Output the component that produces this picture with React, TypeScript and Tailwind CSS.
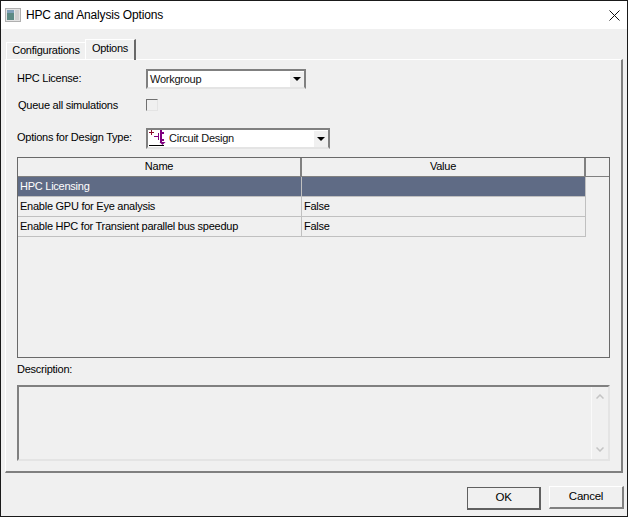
function ComboArrow() {
  return (
    <div className="flex h-full w-[15px] shrink-0 items-center justify-center border-l border-t border-white bg-[#f0f0f0]">
      <svg width="8" height="4" viewBox="0 0 8 4"><path d="M0 0h8L4 4z" fill="#000" /></svg>
    </div>
  );
}

function CircuitIcon() {
  return (
    <svg width="18" height="18" viewBox="0 0 18 18" className="shrink-0" fill="none">
      <path d="M1 3.500h5M3.500 1v5" stroke="#8b0a2a" />
      <path d="M6 7.500h5M10.500 4v7" stroke="#800080" />
      <path d="M13 1v13M13 4h3M13 11h3" stroke="#800080" strokeWidth="2" />
      <path d="M11.500 13h6l-3 3z" fill="#800080" />
      <path d="M1 16.500h15" stroke="#000" />
    </svg>
  );
}

function Row({ name, value, selected }: { name: string; value: string; selected?: boolean }) {
  return (
    <div className={`flex h-5 w-[568px] border-b border-[#c0c0c0] leading-[19px] ${selected ? 'bg-[#5f6b85] text-white' : ''}`}>
      <div className="w-[284px] truncate border-r border-[#c0c0c0] pl-[2px]">{name}</div>
      <div className="flex-1 border-r border-[#c0c0c0] pl-[2px]">{value}</div>
    </div>
  );
}

export default function App() {
  return (
    <div className="flex h-[517px] w-[628px] flex-col overflow-hidden border border-[#1a1a1a] bg-[#f0f0f0] font-['Liberation_Sans',Arial,sans-serif] text-[11px] tracking-[-0.25px] text-black">
      <div className="flex h-[28px] shrink-0 items-center bg-white pl-[4px] pr-[7px]">
        <svg width="16" height="14" viewBox="0 0 16 14" className="shrink-0">
          <rect x="0.500" y="0.500" width="15" height="13" fill="#e4e4e4" stroke="#b0b0b0" />
          <rect x="2" y="2" width="7" height="10" fill="#5c8a84" />
          <rect x="2" y="2" width="7" height="3" fill="#7fa0b8" />
          <rect x="10" y="2" width="4" height="10" fill="#cfcfcf" />
        </svg>
        <span className="ml-[5px] text-[12px] tracking-[-0.15px]">HPC and Analysis Options</span>
        <svg width="11" height="11" viewBox="0 0 11 11" className="ml-auto" fill="none">
          <path d="M0.500 0.500l10 10M10.500 0.500l-10 10" stroke="#111" />
        </svg>
      </div>

      <div className="mx-[4px] mt-[10px] flex h-[20px] shrink-0 items-end pl-[1px]">
        <div className="flex h-[17px] w-[79px] items-center justify-center border-l border-t border-white pb-[1px]">Configurations</div>
        <div className="relative z-10 mb-[-1px] flex h-[21px] w-[51px] items-center justify-center border-l border-t border-r-2 border-white border-r-[#696969] pb-[4px]">Options</div>
      </div>

      <div className="mx-[4px] h-[414px] shrink-0 border-t border-l border-white border-r-2 border-r-[#808080] border-b-2 border-b-[#808080] px-[11px] pt-[8px]">
        <div className="flex h-[21px] items-center">
          <span className="w-[129px]">HPC License:</span>
          <div className="flex h-[20px] w-[160px] items-center justify-between border-2 border-t-[#808080] border-l-[#808080] border-r-[#808080] border-b-[#e4e4e4] bg-white pl-[2px]">
            <span className="pt-[1px] text-[#111]">Workgroup</span>
            <ComboArrow />
          </div>
        </div>

        <div className="mt-[9px] flex h-[14px] items-center">
          <span className="w-[129px] pl-[1px]">Queue all simulations</span>
          <div className="h-[12px] w-[12px] border border-t-[#707070] border-l-[#707070] border-r-[#e4e4e4] border-b-[#e4e4e4]" />
        </div>

        <div className="mt-[15px] flex h-[22px] items-center">
          <span className="w-[129px] pb-[1px]">Options for Design Type:</span>
          <div className="flex h-[21px] w-[184px] items-center border-2 border-t-[#808080] border-l-[#808080] border-r-[#808080] border-b-[#e4e4e4] bg-white">
            <CircuitIcon />
            <span className="ml-[3px] pt-[1px] text-[#111]">Circuit Design</span>
            <div className="ml-auto h-full"><ComboArrow /></div>
          </div>
        </div>

        <div className="mt-[8px] h-[201px] w-[593px] border border-[#696969]">
          <div className="flex h-[19px] border-b border-[#808080] text-center leading-[17px]">
            <div className="w-[284px] border-r-2 border-[#808080]">Name</div>
            <div className="w-[284px] border-r-2 border-[#808080]">Value</div>
            <div className="flex-1" />
          </div>
          <Row name="HPC Licensing" value="" selected />
          <Row name="Enable GPU for Eye analysis" value="False" />
          <Row name="Enable HPC for Transient parallel bus speedup" value="False" />
        </div>

        <div className="mt-[5px] h-[13px] leading-[13px]">Description:</div>

        <div className="mt-[9px] flex h-[76px] w-[593px] justify-end border-2 border-t-[#808080] border-l-[#808080] border-r-[#e4e4e4] border-b-[#e4e4e4]">
          <div className="flex w-[17px] flex-col items-center justify-between border-l border-[#fafafa] py-[7px]">
            <svg width="8" height="5" viewBox="0 0 8 5" fill="none"><path d="M0.500 4.500L4 1l3.500 3.500" stroke="#c4c4c4" strokeWidth="1.500" /></svg>
            <svg width="8" height="5" viewBox="0 0 8 5" fill="none"><path d="M0.500 0.500L4 4l3.500-3.500" stroke="#c4c4c4" strokeWidth="1.500" /></svg>
          </div>
        </div>
      </div>

      <div className="flex flex-1 items-start justify-end gap-[8px] pr-[3px] pt-[13px]">
        <button className="mt-[1px] h-[23px] w-[74px] border border-t-[#606060] border-l-[#606060] border-b-2 border-r-2 border-b-[#606060] border-r-[#606060] bg-[#f0f0f0] text-[11.500px]">OK</button>
        <button className="h-[23px] w-[75px] border border-t-white border-l-white border-b-2 border-r-2 border-b-[#808080] border-r-[#808080] bg-[#f0f0f0] pb-[1px] text-[11.500px]">Cancel</button>
      </div>
    </div>
  );
}
